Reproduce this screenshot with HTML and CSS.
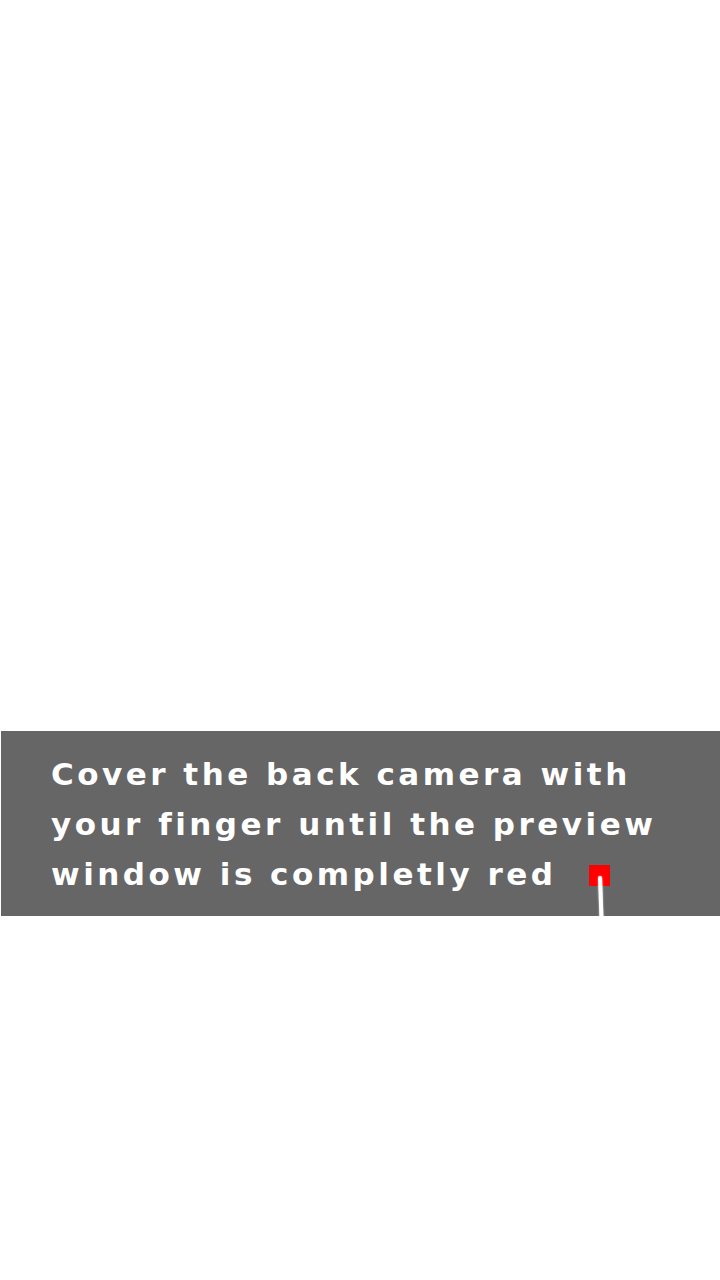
FILE: index.html
```html
<!DOCTYPE html>
<html>
<head>
<meta charset="utf-8">
<link rel="stylesheet" href="styles.css">
</head>
<body>
<div class="page">
  <div class="banner">
    <p class="message">Cover the back camera with<br>your finger until the preview<br>window is completly red</p>
    <div class="pointer">
      <div class="pointer-line"></div>
      <div class="pointer-dot"></div>
    </div>
  </div>
</div>
</body>
</html>
```
FILE: styles.css
```css
html, body {
  margin: 0;
  padding: 0;
  background: #ffffff;
}
.page {
  width: 720px;
  height: 1280px;
  display: flex;
  flex-direction: column;
  padding-top: 731px;
  box-sizing: border-box;
}
.banner {
  position: relative;
  margin-left: 1px;
  height: 185px;
  background: #666666;
  overflow: hidden;
  padding: 18px 0 0 50px;
  box-sizing: border-box;
}
.message {
  margin: 0;
  font-family: "DejaVu Sans", sans-serif;
  font-weight: bold;
  font-size: 31px;
  line-height: 50px;
  letter-spacing: 3.5px;
  color: #ffffff;
  white-space: nowrap;
}
.pointer {
  position: absolute;
  left: 588px;
  top: 134px;
  width: 21px;
  height: 60px;
}
.pointer-dot {
  position: absolute;
  left: 0;
  top: 0;
  width: 21px;
  height: 21px;
  background: #ff0000;
}
.pointer-line {
  position: absolute;
  left: 9px;
  top: 11px;
  width: 4px;
  height: 60px;
  background: #ffffff;
  border-radius: 2px;
  transform: rotate(-2deg);
  transform-origin: top center;
  box-shadow: 0 0 2px rgba(255,255,255,0.7);
  z-index: 1;
}
```
